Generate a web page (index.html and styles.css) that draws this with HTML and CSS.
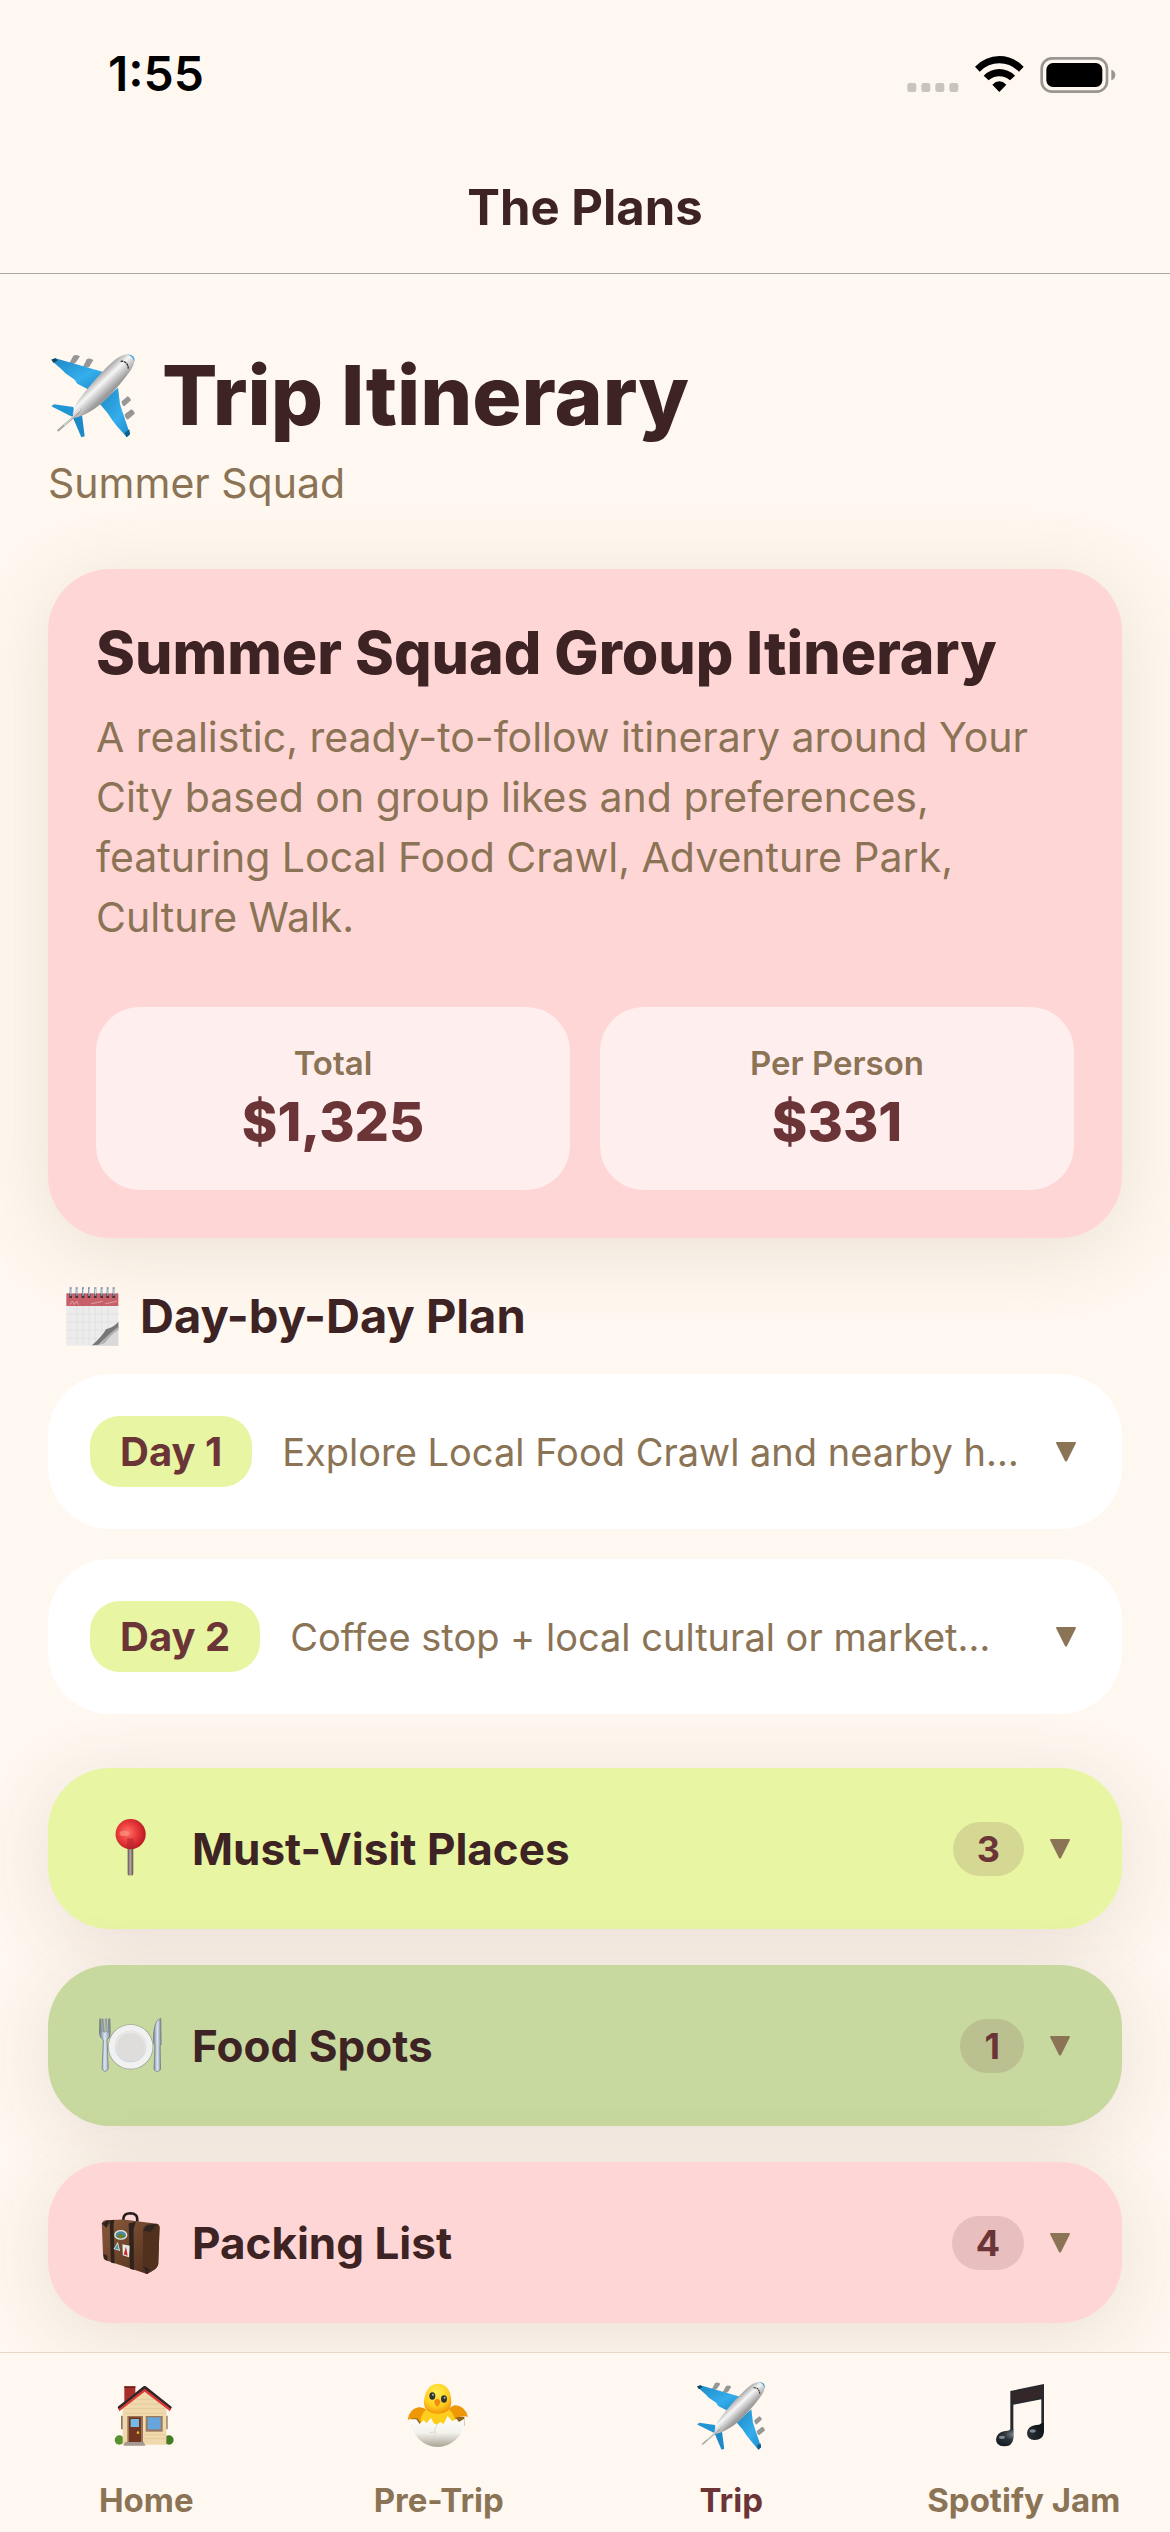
FILE: index.html
```html
<!DOCTYPE html>
<html lang="en">
<head>
<meta charset="utf-8">
<meta name="viewport" content="width=device-width, initial-scale=1">
<title>The Plans</title>
<link rel="stylesheet" href="styles.css">
</head>
<body>
<svg class="defs" aria-hidden="true">
  <defs>
    <linearGradient id="body-metal" gradientUnits="userSpaceOnUse" x1="205" y1="140" x2="245" y2="182">
      <stop offset="0" stop-color="#a9a9a9"/><stop offset=".4" stop-color="#f6f6f6"/><stop offset="1" stop-color="#9b9b9b"/>
    </linearGradient>
    <linearGradient id="wing" x1="0" y1="0" x2="1" y2="1">
      <stop offset="0" stop-color="#1c87c4"/><stop offset=".6" stop-color="#35aeec"/><stop offset="1" stop-color="#1a8acb"/>
    </linearGradient>
    <symbol id="plane" viewBox="64 68 258 258">
      <path d="M122 99l12-23q8-5 20 2l-12 18q-8 8-20 3zM163 109l11-22q9-6 20 2l-12 20q-9 6-19 0zM279 213l18-15q9 4 10 12l-20 18q-9-4-8-15zM288 252l20-15q10 5 10 13l-21 18q-9-5-9-16z" fill="#979797"/>
      <path d="M68 88L80 84L224 125L178 177L146 160L138 148L110 129L100 118L76 97Z" fill="url(#wing)"/>
      <path d="M68 88L80 84L87 90L75 98Z" fill="#16435d"/>
      <path d="M268 172L274 222L288 264L304 312L294 321L262 284L250 268L236 247L213 220Z" fill="url(#wing)"/>
      <path d="M288 308L302 297L304 312L294 321Z" fill="#135e88"/>
      <path d="M68 228L76 222L134 230L140 262L124 256Z" fill="#2295d6"/>
      <path d="M133 262L160 255L168 318L158 321Z" fill="#1c8ac9"/>
      <path d="M313 76C322 86 317 106 300 128C272 166 234 210 204 231C176 250 148 264 134 262C129 250 139 222 152 206C180 170 222 118 262 86C285 70 305 67 313 76Z" fill="url(#body-metal)"/>
      <path d="M298 73Q309 72 314 79Q319 85 317 94Q313 78 298 73Z" fill="#259fe4"/>
      <path d="M276 93Q297 91 299 115" fill="none" stroke="#333" stroke-width="4" stroke-dasharray="8 2"/>
      <path d="M160 233L152 249L89 304L85 300Z" fill="#aaa4a0"/>
      <path d="M155 238L106 285" stroke="#eee" stroke-width="3"/>
    </symbol>
    <symbol id="caret" viewBox="0 0 20 20"><path d="M1 0H19Q20 0 20 1L11 19Q10 20 9 19L0 1Q0 0 1 0Z" fill="currentColor"/></symbol>
    <radialGradient id="ball" cx=".4" cy=".45" r=".65">
      <stop offset="0" stop-color="#ff7468"/><stop offset=".45" stop-color="#ec3d3d"/><stop offset="1" stop-color="#b3131f"/>
    </radialGradient>
    <linearGradient id="needle"><stop offset="0" stop-color="#554c4a"/><stop offset=".45" stop-color="#b9aaa4"/><stop offset="1" stop-color="#57504b"/></linearGradient>
    <linearGradient id="silver"><stop offset="0" stop-color="#718093"/><stop offset=".5" stop-color="#dbe6f3"/><stop offset="1" stop-color="#7e8794"/></linearGradient>
    <linearGradient id="leather" x1="0" y1="0" x2="1" y2="1"><stop offset="0" stop-color="#8a5a3b"/><stop offset="1" stop-color="#4d2c1a"/></linearGradient>
    <radialGradient id="chick" cx=".45" cy=".3" r=".75"><stop offset="0" stop-color="#ffed4f"/><stop offset=".6" stop-color="#ffcf22"/><stop offset="1" stop-color="#f18e04"/></radialGradient>
    <linearGradient id="shell" x1="0" y1="0" x2="0" y2="1"><stop offset="0" stop-color="#fff"/><stop offset=".55" stop-color="#f3f1ec"/><stop offset="1" stop-color="#a9a294"/></linearGradient>
    <radialGradient id="note" cx=".4" cy=".5" r=".6"><stop offset="0" stop-color="#83919c"/><stop offset=".4" stop-color="#2b333a"/><stop offset="1" stop-color="#11171c"/></radialGradient>
  </defs>
</svg>

<div class="status-bar">
  <time class="clock">1:55</time>
  <svg class="status-icons" viewBox="80 42 627 114" role="img" aria-label="Wi-Fi on, battery full">
    <g fill="#cac4bf"><rect x="81" y="126" width="27" height="27" rx="7"/><rect x="123" y="126" width="27" height="27" rx="7"/><rect x="165" y="126" width="27" height="27" rx="7"/><rect x="207" y="126" width="27" height="27" rx="7"/></g>
    <path d="M284 77Q316 45 357 45Q398 45 430 77L416 92Q390 67 357 67Q324 67 298 92ZM310 104Q330 84 357 84Q384 84 404 104L389 118Q375 106 357 106Q339 106 325 118ZM336 131Q346 121 357 121Q368 121 378 131L357 153Z"/>
    <rect x="484" y="52" width="196" height="100" rx="31" fill="none" stroke="#9a9590" stroke-width="8"/>
    <rect x="498" y="66" width="168" height="72" rx="20"/>
    <path d="M693 86Q705 90 705 102Q705 114 693 118Z" fill="#9a9590"/>
  </svg>
</div>

<header class="nav-bar"><span class="nav-title">The Plans</span></header>

<main class="content">
  <h1 class="page-title"><svg class="title-icon" aria-hidden="true"><use href="#plane"/></svg>Trip Itinerary</h1>
  <p class="group-name">Summer Squad</p>

  <section class="summary">
    <h2 class="summary-title">Summer Squad Group Itinerary</h2>
    <p class="summary-text">A realistic, ready-to-follow itinerary around Your City based on group likes and preferences, featuring Local Food Crawl, Adventure Park, Culture Walk.</p>
    <dl class="stats">
      <div class="stat"><dt>Total</dt><dd>$1,325</dd></div>
      <div class="stat"><dt>Per Person</dt><dd>$331</dd></div>
    </dl>
  </section>

  <h2 class="plan-title">
    <svg class="plan-icon" viewBox="50 47 159 177" aria-hidden="true">
      <rect x="51" y="100" width="156" height="123" fill="#ececec"/>
      <path d="M82 104V222M101 104V222M119 104V222M138 104V222M157 104V222M176 104V200M51 128H207M51 152H207M51 177H190M51 201H160" stroke="#dcdcdc" stroke-width="2"/>
      <path d="M207 150Q196 168 177 170Q160 186 152 202Q138 218 122 223H207Z" fill="#d9d9d9"/>
      <path d="M207 152Q190 170 170 174Q158 196 128 222L148 220Q165 198 207 172Z" fill="#777"/>
      <path d="M207 166Q176 188 150 221L166 215Q184 190 207 176Z" fill="#aeaeae"/>
      <rect x="51" y="66" width="156" height="38" fill="#c8606a"/>
      <path d="M62 100L69 89L75 100L82 89L88 100M126 97L160 90M168 97L202 90" stroke="#dea0a3" stroke-width="3" fill="none"/>
      <path d="M64 66V80M82 66V80M101 66V80M119 66V80M138 66V80M157 66V80M175 66V80M193 66V80" stroke="#463337" stroke-width="8"/>
      <path d="M64 48V74M82 48V74M101 48V74M119 48V74M138 48V74M157 48V74M175 48V74M193 48V74" stroke="#7a8a9d" stroke-width="6"/>
      <path d="M65 52V68M83 52V68M102 52V68M120 52V68M139 52V68M158 52V68M176 52V68M194 52V68" stroke="#e3eaf2" stroke-width="3"/>
    </svg>Day-by-Day Plan</h2>

  <div class="days">
    <button class="day" type="button"><span class="day-tag">Day 1</span><span class="day-text">Explore Local Food Crawl and nearby h…</span><svg class="caret" aria-hidden="true"><use href="#caret"/></svg></button>
    <button class="day" type="button"><span class="day-tag">Day 2</span><span class="day-text">Coffee stop + local cultural or market…</span><svg class="caret" aria-hidden="true"><use href="#caret"/></svg></button>
  </div>

  <div class="sections">
    <button class="section lime" type="button">
      <svg class="section-icon" viewBox="18 46 198 198" aria-hidden="true">
        <rect x="113" y="140" width="17" height="87" rx="4" fill="url(#needle)"/>
        <circle cx="122" cy="101" r="46" fill="url(#ball)"/>
        <path d="M112 114h19l3 31q-12 3-24 0z" fill="#b52533" opacity=".55"/>
        <ellipse cx="103" cy="99" rx="15" ry="8" fill="#ff9a86" opacity=".6"/>
      </svg>
      <span class="section-name">Must-Visit Places</span><span class="count">3</span><svg class="caret" aria-hidden="true"><use href="#caret"/></svg>
    </button>
    <button class="section sage" type="button">
      <svg class="section-icon" viewBox="18 38 198 198" aria-hidden="true">
        <circle cx="122" cy="141" r="69" fill="#8f9a86"/><circle cx="122" cy="141" r="67" fill="#f1f1f1"/>
        <circle cx="122" cy="140" r="48" fill="#c5d2dd"/><circle cx="122" cy="138" r="47" fill="#e9e7e5"/><circle cx="122" cy="142" r="43" fill="#dedddc"/>
        <path d="M28 56L27 100Q28 114 39 120L35 208Q44 224 54 208L50 120Q60 114 60 100L59 56H55L54 96H50L49 56H45L44 96H40L38 56H35L34 96H31L31 56Z" fill="url(#silver)" stroke="#66717d" stroke-width="2"/>
        <path d="M214 55Q198 56 193 92Q190 120 193 134L196 138L193 210Q203 222 213 210L212 138L215 134Z" fill="url(#silver)" stroke="#66717d" stroke-width="2"/>
      </svg>
      <span class="section-name">Food Spots</span><span class="count">1</span><svg class="caret" aria-hidden="true"><use href="#caret"/></svg>
    </button>
    <button class="section pink" type="button">
      <svg class="section-icon" viewBox="18 627 198 198" aria-hidden="true">
        <path d="M100 664V652Q102 637 121 637Q142 638 142 654V670" fill="none" stroke="#241d1b" stroke-width="8"/>
        <path d="M34 668Q36 659 46 658L100 656L201 669Q210 671 210 681L206 792Q203 804 190 811L172 822L46 780Q38 776 38 766Z" fill="url(#leather)"/>
        <path d="M160 686Q161 676 171 674L201 669Q210 671 210 681L206 792Q203 804 190 811L172 822Q160 819 159 808Z" fill="#51301e"/>
        <path d="M58 659L72 657L70 672L73 790L62 787ZM116 668L138 663L131 684L132 810L120 806Z" fill="#30221d"/>
        <path d="M34 668L50 658L60 660L48 682ZM39 760L51 766V782L42 776ZM160 690L172 672L202 670L183 694ZM160 798L181 806L172 822Z" fill="#302520"/>
        <ellipse cx="92" cy="703" rx="20" ry="15" fill="#e6e9df"/><ellipse cx="92" cy="703" rx="16" ry="11" fill="#478ba5"/><path d="M78 708L90 698L107 707Q92 719 78 708Z" fill="#6e7e2e"/>
        <path d="M83 724L90 752L70 746Z" fill="#d9e7dd"/><path d="M82 730L86 748L74 744Z" fill="#3f9ba0"/>
        <path d="M97 731L119 736L117 771L98 765Z" fill="#e4eeea"/><path d="M108 738L113 766L101 762Z" fill="#cd2926"/>
      </svg>
      <span class="section-name">Packing List</span><span class="count">4</span><svg class="caret" aria-hidden="true"><use href="#caret"/></svg>
    </button>
  </div>
</main>

<nav class="tab-bar" aria-label="Main">
  <a class="tab" href="#home">
    <svg class="tab-icon" viewBox="64 63 210 210" aria-hidden="true">
      <circle cx="89" cy="240" r="14" fill="#5a9130"/><circle cx="238" cy="240" r="14" fill="#437c24"/>
      <rect x="104" y="79" width="33" height="52" fill="#a82e2a"/><rect x="104" y="79" width="33" height="5" fill="#6b211e"/>
      <path d="M94 167h6v41h-6zM228 167h6v41h-6z" fill="#94755f"/>
      <path d="M99 145L165 93L230 145V254H99Z" fill="#f0d9ad"/>
      <path d="M140 118H192M122 132H210M104 146H226M100 160H230M163 224H230M163 236H230" stroke="#dfc493" stroke-width="2"/>
      <path d="M84 141L160 80Q165 76 170 80L246 141L241 154L165 95L89 154Z" fill="#dc3935"/>
      <path d="M84 141L160 80Q165 76 170 80L246 141L244 147L165 86L87 147Z" fill="#29292c"/>
      <rect x="113" y="168" width="47" height="78" fill="#9a7456"/><rect x="118" y="172" width="36" height="74" fill="#713420"/><rect x="123" y="177" width="25" height="24" fill="#75b9e7"/><circle cx="145" cy="218" r="4" fill="#e9b43b"/>
      <rect x="168" y="168" width="51" height="47" fill="#987a62"/><rect x="174" y="172" width="39" height="36" fill="#66a6dc"/>
      <path d="M106 246H162L167 257H101Z" fill="#a39991"/>
    </svg><span>Home</span></a>
  <a class="tab" href="#pre-trip">
    <svg class="tab-icon" viewBox="941 63 210 210" aria-hidden="true">
      <path d="M962 170H1122V198H962Z" fill="#8f651c"/>
      <path d="M952 180Q956 148 984 142Q998 140 1010 150L988 186Q982 170 970 176Q962 174 952 180ZM1133 170Q1124 138 1096 136Q1080 138 1074 150L1094 184Q1096 168 1106 172Q1118 166 1133 170Z" fill="#ee9708"/>
      <path d="M992 206Q984 168 1006 150H1078Q1100 168 1092 206Z" fill="#ffcd1c"/>
      <path d="M1042 71C1070 71 1082 94 1083 122C1084 150 1066 161 1042 161C1018 161 1000 150 1001 126C1002 100 1014 71 1042 71Z" fill="url(#chick)"/>
      <ellipse cx="1026" cy="108" rx="9" ry="11" fill="#33352e"/><ellipse cx="1061" cy="117" rx="9" ry="11" fill="#33352e"/><circle cx="1028" cy="104" r="3" fill="#a9bcc0"/><circle cx="1063" cy="113" r="3" fill="#a9bcc0"/>
      <path d="M1032 123Q1040 110 1050 123Q1050 134 1041 140Q1032 134 1032 123Z" fill="#ef8b10"/>
      <path d="M961 178L978 178L988 192L1000 180L1008 190L1022 174L1030 190L1040 194L1050 186L1060 192L1072 168L1086 184L1098 176L1106 186L1122 176Q1124 212 1098 238Q1072 261 1042 261Q1010 261 986 238Q960 212 961 178Z" fill="url(#shell)"/>
      <path d="M1040 194L1032 212L1038 216L1030 228M1034 216L1018 218" stroke="#d4cfc2" stroke-width="2" fill="none"/>
    </svg><span>Pre-Trip</span></a>
  <a class="tab active" href="#trip" aria-current="page"><svg class="tab-icon" aria-hidden="true"><use href="#plane"/></svg><span>Trip</span></a>
  <a class="tab" href="#spotify-jam">
    <svg class="tab-icon" viewBox="926 63 210 210" aria-hidden="true">
      <path d="M990 93L1091 72V210H1083V118L999 134V234H990Z" fill="#25292e"/>
      <path d="M993 97L1087 77V112L999 129Z" fill="#33272a"/>
      <path d="M999 206V236Q996 259 970 259Q947 258 947 238Q949 217 974 213Q986 214 990 208ZM1091 188V217Q1088 240 1063 240Q1040 239 1040 219Q1042 198 1066 195Q1079 196 1083 190Z" fill="url(#note)"/>
      <ellipse cx="965" cy="232" rx="9" ry="5" fill="#a6b1b7" opacity=".7"/><ellipse cx="1057" cy="213" rx="9" ry="5" fill="#a6b1b7" opacity=".7"/>
    </svg><span>Spotify Jam</span></a>
</nav>
</body>
</html>
```

FILE: styles.css
```css
:root {
  --cream: #fff8f0;
  --ink: #3d2323;
  --brown: #8b7355;
  --maroon: #6b3538;
  --pink: #ffd6d6;
  --lime: #e8f5a3;
  --sage: #c8d9a0;
}

* { box-sizing: border-box; }

body {
  margin: 0;
  min-height: 100vh;
  display: flex;
  flex-direction: column;
  background: var(--cream);
  color: var(--ink);
  font-family: Inter, "Liberation Sans", sans-serif;
}

h1, h2, p, dl, dd { margin: 0; }

button {
  border: 0;
  font: inherit;
  color: inherit;
  text-align: left;
  cursor: pointer;
}

svg { display: block; flex: none; }
.defs { position: absolute; width: 0; height: 0; }

.status-bar {
  display: flex;
  align-items: center;
  justify-content: space-between;
  height: 141px;
  padding: 6px 54px 0 108px;
  color: #000;
}
.clock { font-size: 48px; font-weight: 600; }
.status-icons { width: 209px; height: 38px; }

.nav-bar {
  display: flex;
  align-items: center;
  justify-content: center;
  height: 133px;
  border-bottom: 1px solid #aca7a3;
}
.nav-title { font-size: 49px; font-weight: 700; }

.content { flex: 1; padding: 65px 48px 29px; }

.page-title {
  display: flex;
  align-items: center;
  gap: 24px;
  font-size: 82px;
  line-height: 114px;
  font-weight: 800;
}
.title-icon { width: 90px; height: 86px; }
.group-name { color: var(--brown); font-size: 41px; line-height: 60px; }

.summary {
  margin-top: 56px;
  padding: 48px;
  border-radius: 62px;
  background: var(--pink);
  box-shadow: 0 12px 72px rgba(139, 115, 85, .18);
}
.summary-title { font-size: 59px; line-height: 72px; font-weight: 800; }
.summary-text { margin-top: 18px; color: var(--brown); font-size: 41px; line-height: 60px; }
.stats { display: grid; grid-template-columns: 1fr 1fr; gap: 30px; margin-top: 60px; }
.stat {
  padding: 36px 24px;
  border-radius: 44px;
  background: #ffeeee;
  text-align: center;
}
.stat dt { color: var(--brown); font-size: 33px; line-height: 40px; font-weight: 600; }
.stat dd { margin-top: 6px; color: var(--maroon); font-size: 54px; line-height: 65px; font-weight: 800; }

.plan-title {
  display: flex;
  align-items: center;
  gap: 21px;
  margin-top: 48px;
  padding-left: 18px;
  font-size: 47px;
  line-height: 60px;
  font-weight: 700;
}
.plan-icon { width: 53px; height: 59px; }

.days { display: grid; gap: 30px; margin-top: 28px; }
.day {
  display: flex;
  align-items: center;
  gap: 30px;
  width: 100%;
  min-width: 0;
  padding: 42px;
  border-radius: 62px;
  background: #fff;
}
.day-tag {
  flex: none;
  padding: 12px 30px;
  border-radius: 30px;
  background: var(--lime);
  color: var(--maroon);
  font-size: 40px;
  line-height: 47px;
  font-weight: 700;
}
.day-text {
  flex: 1;
  min-width: 0;
  overflow: hidden;
  white-space: nowrap;
  color: var(--brown);
  font-size: 38px;
  line-height: 48px;
}
.caret { width: 20px; height: 20px; margin-right: 4px; color: var(--brown); }

.sections { display: grid; gap: 36px; margin-top: 54px; }
.section {
  display: flex;
  align-items: center;
  width: 100%;
  padding: 48px;
  border-radius: 62px;
  box-shadow: 0 12px 72px rgba(107, 70, 60, .14);
}
.lime { background: var(--lime); }
.sage { background: var(--sage); }
.pink { background: var(--pink); }
.section-icon { width: 66px; height: 65px; }
.section-name { flex: 1; padding-left: 30px; font-size: 44px; line-height: 54px; font-weight: 700; }
.count {
  margin-right: 26px;
  padding: 6px 24px;
  border-radius: 27px;
  background: rgba(107, 53, 56, .15);
  color: var(--maroon);
  font-size: 36px;
  line-height: 42px;
  font-weight: 700;
}

.tab-bar {
  position: sticky;
  bottom: 0;
  display: grid;
  grid-template-columns: repeat(4, 1fr);
  padding: 28px 0 12px;
  border-top: 1px solid #ead9c9;
  background: var(--cream);
}
.tab {
  display: flex;
  flex-direction: column;
  align-items: center;
  gap: 29px;
  color: var(--brown);
  font-size: 33px;
  line-height: 40px;
  font-weight: 700;
  text-decoration: none;
  white-space: nowrap;
}
.tab-icon { width: 70px; height: 70px; }
.active { color: var(--maroon); }
```
